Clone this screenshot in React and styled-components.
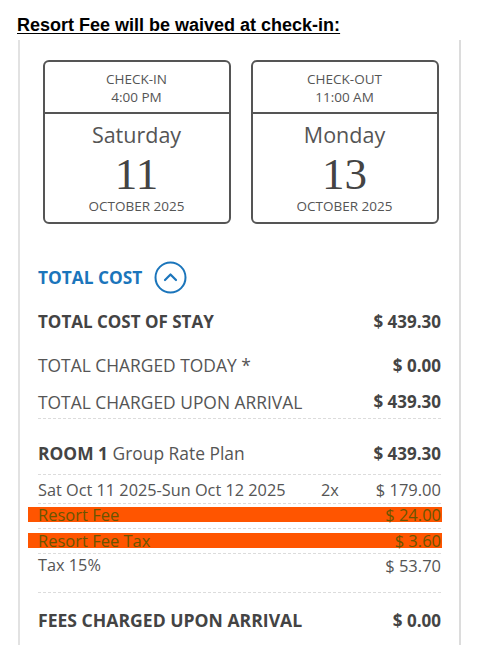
import React from 'react'
import styled, { createGlobalStyle } from 'styled-components'

const Global = createGlobalStyle`
  body {
    margin: 0;
    background: #fff;
    font-family: "Open Sans", "Noto Sans", sans-serif;
    color: #555;
  }
`

const Page = styled.div`
  width: 483px;
  height: 665px;
  padding-top: 15px;
  box-sizing: border-box;
`

const Notice = styled.h2`
  margin: 0 0 0 17px;
  font-family: "Liberation Sans", Arial, sans-serif;
  font-size: 18px;
  font-weight: 700;
  line-height: 21px;
  color: #000;
  text-decoration: underline;
  text-underline-offset: 2px;
`

const Panel = styled.section`
  margin: 4px 0 0 18px;
  width: 443px;
  height: 605px;
  box-sizing: border-box;
  border-left: 2px solid #e2e2e2;
  border-right: 2px solid #dcdcdc;
  padding: 20px 18px 0;
`

const Dates = styled.div`
  display: flex;
  justify-content: center;
  gap: 20px;
  padding-left: 2px;
`

const DateCard = styled.div`
  width: 188px;
  height: 164px;
  box-sizing: border-box;
  border: 2px solid #555;
  border-radius: 6px;
  display: flex;
  flex-direction: column;
  text-align: center;
`

const CardHead = styled.div`
  height: 52px;
  border-bottom: 2px solid #555;
  display: flex;
  flex-direction: column;
  justify-content: center;
  font-size: 13.5px;
  line-height: 18px;
  color: #555;
  padding-top: 1px;
  box-sizing: border-box;
`

const DayName = styled.div`
  margin-top: 7px;
  font-size: 21.5px;
  line-height: 28px;
  color: #555;
`

const DayNumber = styled.div`
  font-family: "Liberation Serif", "Times New Roman", serif;
  font-size: 45px;
  line-height: 50px;
  color: #444;
`

const Month = styled.div`
  font-size: 13.5px;
  line-height: 18px;
  color: #555;
  margin-top: -2px;
`

const CostHeader = styled.div`
  margin-top: 35px;
  height: 36px;
  display: flex;
  align-items: center;
  gap: 12px;
  color: #1b75bb;
  font-size: 17.3px;
  font-weight: 700;
`

const Row = styled.div`
  display: flex;
  align-items: center;
  justify-content: space-between;
  height: ${(p) => p.$h}px;
  padding: ${(p) => p.$pad || '0'};
  box-sizing: border-box;
  border-bottom: ${(p) => (p.$line ? '1px dashed #dcdcdc' : 'none')};
  font-size: ${(p) => p.$size || 17.4}px;
  color: ${(p) => (p.$bold ? '#444' : '#555')};
  font-weight: ${(p) => (p.$bold ? 700 : 400)};
`

const Label = styled.span`
  white-space: nowrap;
`

const Strong = styled.b`
  color: #444;
`

const Amount = styled.span`
  font-weight: ${(p) => (p.$bold ? 700 : 400)};
  color: ${(p) => (p.$bold ? '#444' : '#555')};
  font-size: ${(p) => p.$size || 17}px;
`

const Count = styled.span`
  margin-left: auto;
  margin-right: 37px;
`

const Highlight = styled.div`
  flex: 1;
  display: flex;
  justify-content: space-between;
  align-items: center;
  height: 15px;
  margin-left: -10px;
  margin-right: -1px;
  padding: 0 1px 0 10px;
  background: #ff5500;
  color: #6a5500;
  font-size: 16.5px;
  line-height: 15px;
  white-space: nowrap;
`

const Chevron = () => (
  <svg width="33" height="33" viewBox="0 0 33 33" fill="none">
    <circle cx="16.5" cy="16.5" r="15" stroke="#1b75bb" strokeWidth="2" />
    <path d="M11 19 L16.5 13.5 L22 19" stroke="#1b75bb" strokeWidth="2.2" strokeLinecap="round" strokeLinejoin="round" />
  </svg>
)

const stays = [
  { head: 'CHECK-IN', time: '4:00 PM', day: 'Saturday', num: '11' },
  { head: 'CHECK-OUT', time: '11:00 AM', day: 'Monday', num: '13' },
]

export default function App() {
  return (
    <Page>
      <Global />
      <Notice>Resort Fee will be waived at check-in:</Notice>
      <Panel>
        <Dates>
          {stays.map((s) => (
            <DateCard key={s.head}>
              <CardHead>
                <div>{s.head}</div>
                <div>{s.time}</div>
              </CardHead>
              <DayName>{s.day}</DayName>
              <DayNumber>{s.num}</DayNumber>
              <Month>OCTOBER 2025</Month>
            </DateCard>
          ))}
        </Dates>

        <CostHeader>
          TOTAL COST
          <Chevron />
        </CostHeader>

        <Row $h={48} $pad="4px 0 0" $bold $size={17}>
          <Label>TOTAL COST OF STAY</Label>
          <Amount $bold>$ 439.30</Amount>
        </Row>
        <Row $h={40} $pad="4px 0 0">
          <Label>TOTAL CHARGED TODAY *</Label>
          <Amount $bold>$ 0.00</Amount>
        </Row>
        <Row $h={36} $pad="4px 0 2px" $line>
          <Label>TOTAL CHARGED UPON ARRIVAL</Label>
          <Amount $bold>$ 439.30</Amount>
        </Row>
        <Row $h={56} $pad="23px 0 10px" $line>
          <Label>
            <Strong>ROOM 1</Strong> Group Rate Plan
          </Label>
          <Amount $bold>$ 439.30</Amount>
        </Row>
        <Row $h={29} $pad="1px 0 0" $line $size={16.3}>
          <Label>Sat Oct 11 2025-Sun Oct 12 2025</Label>
          <Count>2x</Count>
          <Amount $size={16.5}>$ 179.00</Amount>
        </Row>
        <Row $h={25} $pad="3px 0 6px" $line>
          <Highlight>
            <span>Resort Fee</span>
            <span>$ 24.00</span>
          </Highlight>
        </Row>
        <Row $h={25} $pad="4px 0 5px" $line>
          <Highlight>
            <span>Resort Fee Tax</span>
            <span>$ 3.60</span>
          </Highlight>
        </Row>
        <Row $h={39} $pad="0 0 16px" $line $size={16.3}>
          <Label>Tax 15%</Label>
          <Amount $size={16.5}>$ 53.70</Amount>
        </Row>
        <Row $h={54} $pad="0" $bold $size={17.6}>
          <Label>FEES CHARGED UPON ARRIVAL</Label>
          <Amount $bold>$ 0.00</Amount>
        </Row>
      </Panel>
    </Page>
  )
}
